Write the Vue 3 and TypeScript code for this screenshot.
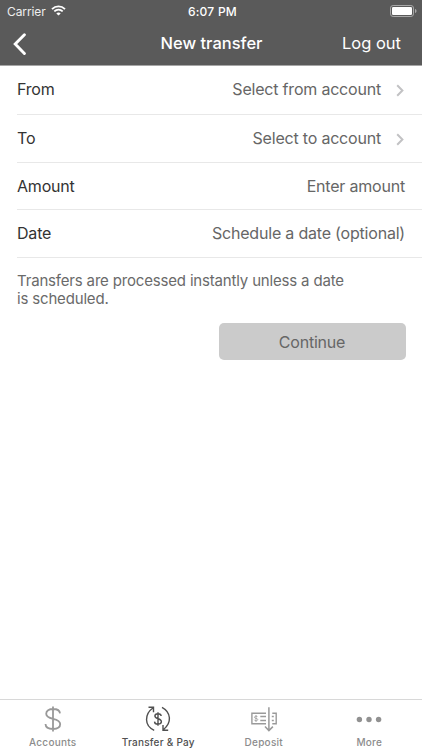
<script setup lang="ts">
interface Row {
  label: string
  value: string
  chevron: boolean
  size: string
}

const rows: Row[] = [
  { label: 'From', value: 'Select from account', chevron: true, size: 'first' },
  { label: 'To', value: 'Select to account', chevron: true, size: 'second' },
  { label: 'Amount', value: 'Enter amount', chevron: false, size: 'third' },
  { label: 'Date', value: 'Schedule a date (optional)', chevron: false, size: 'fourth' },
]
</script>

<template>
  <div class="screen">
    <header class="header">
      <div class="status">
        <div class="carrier">
          <span>Carrier</span>
          <svg class="wifi" width="15" height="11" viewBox="0 0 15 11" fill="none" stroke="#fff">
            <path d="M1 4.1C4.7.5 10.3.5 14 4.1" stroke-width="1.9" />
            <path d="M3.3 6.4c2.4-2.2 6-2.2 8.4 0" stroke-width="1.8" />
            <path d="M7.5 10.6 5.3 8.4c1.2-1.1 3.2-1.1 4.4 0z" fill="#fff" stroke="none" />
          </svg>
        </div>
        <span class="time">6:07 PM</span>
        <svg class="battery" width="27" height="12" viewBox="0 0 27 12">
          <rect x=".5" y=".5" width="23" height="11" rx="2.6" fill="none" stroke="#a8a8a8" />
          <rect x="2" y="2" width="20" height="8" rx="1.2" fill="#fff" />
          <path d="M25 4c2 .6 2 3.4 0 4z" fill="#a8a8a8" />
        </svg>
      </div>
      <div class="nav">
        <svg class="back" width="14" height="22" viewBox="0 0 14 22" fill="none" stroke="#fff" stroke-width="2.9" stroke-linecap="round" stroke-linejoin="miter">
          <path d="M11.4 1.7 2.2 11.1l9.2 9.3" />
        </svg>
        <h1 class="title">New transfer</h1>
        <span class="logout">Log out</span>
      </div>
    </header>

    <main class="content">
      <div v-for="row in rows" :key="row.label" class="row" :class="row.size">
        <span class="label">{{ row.label }}</span>
        <span class="value">{{ row.value }}</span>
        <svg v-if="row.chevron" class="chevron" width="8" height="13" viewBox="0 0 8 13" fill="none" stroke="#c2c2c4" stroke-width="2">
          <path d="M1.2 1.2l5.2 5.3-5.2 5.3" />
        </svg>
      </div>
      <p class="note">Transfers are processed instantly unless a date<br />is scheduled.</p>
      <button class="continue" type="button">Continue</button>
    </main>

    <footer class="tabs">
      <div class="tab">
        <svg width="28" height="28" viewBox="0 0 28 28" fill="none" stroke="#999" stroke-width="1.8">
          <path d="M14 1.4v25.2M21 8.4C20.8 5.5 18 4 14.1 4 10 4 7.2 5.9 7.2 8.8c0 3.1 2.8 4.1 6.8 5 4.4 1 7.2 2.2 7.2 5.3 0 3-2.9 4.9-7.1 4.9-4.5 0-7.5-1.8-7.6-5" />
        </svg>
        <span>Accounts</span>
      </div>
      <div class="tab active">
        <svg width="28" height="28" viewBox="0 0 28 28" fill="none" stroke="#505050" stroke-width="1.4">
          <path d="M10.2 25.3C.2 21 .1 9.2 9.2 2.8M4.5 2.3h5v5M18 2.3c9.3 5 10 15.6 1.3 22.4M24.2 25.2h-5.2v-5.1" />
          <path d="M14 7.2v13.6M17.2 11c-.1-1.5-1.4-2.3-3.2-2.3s-3.1.9-3.1 2.4c0 1.7 1.5 2.2 3.1 2.6 2 .5 3.4 1.1 3.4 2.9 0 1.6-1.4 2.6-3.4 2.6s-3.4-.9-3.5-2.6" />
        </svg>
        <span>Transfer &amp; Pay</span>
      </div>
      <div class="tab">
        <svg width="28" height="28" viewBox="0 0 28 28" fill="none" stroke="#9a9a9a" stroke-width="1.4">
          <path d="M16 8.3H1.9v10.5H16M22.3 8.3h3.9v10.5h-3.9M10.3 11.5H16M10.3 15.5H16M21.8 11.5h2M21.8 15.5h2" />
          <path d="M6 10v7M7.6 12c-.2-.6-.8-.8-1.6-.8-1 0-1.6.5-1.6 1.1 0 1.5 3.4.7 3.4 2.3 0 .7-.7 1.1-1.8 1.1-1 0-1.6-.3-1.8-1" stroke-width=".8" />
          <path d="M18.9 2.3v23M15 21.6l3.9 4 4-4" stroke-width="1.5" />
        </svg>
        <span>Deposit</span>
      </div>
      <div class="tab">
        <svg width="28" height="28" viewBox="0 0 28 28" fill="#919191">
          <circle cx="4.4" cy="14.5" r="2.7" />
          <circle cx="14" cy="14.5" r="2.7" />
          <circle cx="23.6" cy="14.5" r="2.7" />
        </svg>
        <span>More</span>
      </div>
    </footer>
  </div>
</template>

<style>
body {
  margin: 0;
  background: #fff;
}
</style>

<style scoped>
.screen {
  display: flex;
  flex-direction: column;
  width: 422px;
  height: 750px;
  overflow: hidden;
  background: #fff;
  font-family: Inter, 'Liberation Sans', sans-serif;
  color: #333;
}
.header {
  box-sizing: border-box;
  height: 66px;
  background: #5a5a5a;
  border-bottom: 1px solid #a6a6a6;
  color: #fff;
}
.status {
  display: grid;
  grid-template-columns: 1fr auto 1fr;
  align-items: center;
  height: 22px;
  padding: 0 5px 0 7px;
}
.carrier {
  display: flex;
  align-items: center;
  gap: 5px;
  font-size: 12px;
  letter-spacing: -0.1px;
  color: #eee;
}
.wifi {
  margin-top: -1px;
}
.time {
  margin-left: 1px;
  font-size: 12px;
  font-weight: 500;
  letter-spacing: 0.25px;
}
.battery {
  justify-self: end;
  margin-top: -1px;
}
.nav {
  display: grid;
  grid-template-columns: 1fr auto 1fr;
  align-items: center;
  height: 42px;
  padding: 0 21px 0 13px;
}
.title {
  margin: 0 0 0 9px;
  font-size: 16.5px;
  font-weight: 500;
  line-height: 22px;
}
.back {
  margin-top: 1px;
}
.logout {
  justify-self: end;
  font-size: 16.5px;
  line-height: 22px;
}
.content {
  display: flex;
  flex: 1;
  flex-direction: column;
}
.row {
  display: flex;
  box-sizing: border-box;
  align-items: center;
  margin-left: 17px;
  padding-right: 17px;
  border-bottom: 1px solid #e8e8e8;
  font-size: 16px;
  line-height: 20px;
  letter-spacing: -0.2px;
}
.first {
  height: 49px;
  padding-bottom: 2px;
}
.second {
  height: 48px;
  padding-bottom: 1px;
}
.third {
  height: 47px;
}
.fourth {
  height: 48px;
  padding-bottom: 1px;
}
.value {
  margin-left: auto;
  color: #666;
}
.chevron {
  margin: 2px 1px 0 15px;
}
.note {
  margin: 14px 17px 0;
  font-size: 15px;
  line-height: 18px;
  letter-spacing: -0.17px;
  color: #6a6a6a;
}
.continue {
  align-self: flex-end;
  width: 187px;
  height: 37px;
  margin: 15px 16.5px 0 0;
  padding: 0;
  border: 0;
  border-radius: 5px;
  background: #cbcbcb;
  font-family: inherit;
  font-size: 16px;
  letter-spacing: -0.2px;
  color: #666;
}
.tabs {
  display: grid;
  grid-template-columns: repeat(4, 1fr);
  box-sizing: border-box;
  height: 51px;
  border-top: 1px solid #d8d8d8;
}
.tab {
  display: flex;
  flex-direction: column;
  align-items: center;
  padding-top: 5px;
  font-size: 10px;
  line-height: 14px;
  letter-spacing: 0.25px;
  color: #8c8c8c;
}
.tab span {
  margin-top: 2px;
  font-weight: 500;
}
.active {
  color: #505050;
}
</style>
